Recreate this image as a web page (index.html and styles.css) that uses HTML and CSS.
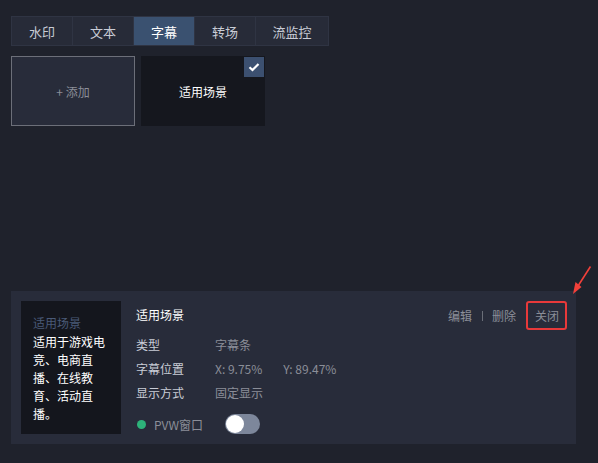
FILE: index.html
```html
<!DOCTYPE html>
<html lang="zh">
<head>
<meta charset="utf-8">
<link rel="stylesheet" href="styles.css">
</head>
<body>
<div class="page">
  <div class="tabs">
    <div class="tab t1">水印</div>
    <div class="tab t1">文本</div>
    <div class="tab t1 active">字幕</div>
    <div class="tab t1">转场</div>
    <div class="tab t2">流监控</div>
  </div>
  <div class="cards">
    <div class="card add">+ 添加</div>
    <div class="card scene">适用场景
      <span class="check"><svg width="12" height="10" viewBox="0 0 12 10"><path d="M1.5 5.2 L4.5 8 L10.5 2" fill="none" stroke="#fff" stroke-width="2.2"/></svg></span>
    </div>
  </div>
  <div class="spacer"></div>
  <div class="panel">
    <div class="thumb">
      <div class="thumb-title">适用场景</div>
      <div class="thumb-text">适用于游戏电竞、电商直播、在线教育、活动直播。</div>
    </div>
    <div class="info">
      <div class="info-title">适用场景</div>
      <div class="row"><span class="label">类型</span><span class="val">字幕条</span></div>
      <div class="row"><span class="label">字幕位置</span><span class="val">X: 9.75%</span><span class="val y">Y: 89.47%</span></div>
      <div class="row"><span class="label">显示方式</span><span class="val">固定显示</span></div>
      <div class="pvw"><span class="dot"></span><span class="pvw-label">PVW窗口</span><span class="toggle"><span class="knob"></span></span></div>
    </div>
    <div class="actions">
      <span class="act">编辑</span><span class="sep"></span><span class="act">删除</span><span class="sep"></span><span class="act close">关闭</span>
    </div>
    <svg class="arrow" width="22" height="30" viewBox="0 0 22 30"><path d="M19.5 1.5 L7 21" stroke="#f2403a" stroke-width="1.6" fill="none"/><path d="M2 29 L4.5 17 L10.5 22 Z" fill="#f2403a"/></svg>
  </div>
</div>
</body>
</html>
```
FILE: styles.css
```css
* { box-sizing: border-box; }
html, body { margin: 0; padding: 0; }
body {
  background: #1f222c;
  width: 598px;
  height: 463px;
  font-family: "Noto Sans CJK SC", "Microsoft YaHei", sans-serif;
  overflow: hidden;
}
.page { padding: 16px 0 0 11px; display: flex; flex-direction: column; height: 463px; }
.tabs { display: flex; width: 318px; height: 30px; border: 1px solid #2f3443; background: #272b38; }
.tab { display: flex; align-items: center; justify-content: center; font-size: 13px; color: #c8ccd6; border-right: 1px solid #2f3443; }
.tab.t1 { width: 61px; }
.tab.t2 { flex: 1; border-right: none; }
.tab.active { background: #3a5170; color: #fff; }
.cards { display: flex; gap: 6px; margin-top: 10px; }
.card { width: 124px; height: 70px; display: flex; align-items: center; justify-content: center; font-size: 12px; position: relative; }
.card.add { border: 1px solid #6c6f79; background: #282c3a; color: #8b8e98; }
.card.scene { background: #15171e; color: #fff; }
.check { position: absolute; right: 1px; top: 1px; width: 20px; height: 20px; background: #3c5070; display: flex; align-items: center; justify-content: center; }
.spacer { flex: 0 0 165px; }
.panel { position: relative; width: 565px; height: 153px; background: #282c3a; display: flex; padding: 10px; }
.thumb { width: 100px; height: 133px; background: #14161d; padding: 13px 10px 0 12px; font-size: 12px; line-height: 18px; }
.thumb-title { color: #4a5a78; margin-bottom: 1px; }
.thumb-text { color: #fff; }
.info { margin-left: 15px; padding-top: 5px; font-size: 12px; }
.info-title { color: #fff; line-height: 18px; margin-bottom: 12px; }
.row { display: flex; line-height: 18px; margin-bottom: 6px; }
.label { width: 79px; color: #c8ccd6; }
.val { color: #8b8e98; }
.val.y { margin-left: 21px; }
.pvw { display: flex; align-items: center; margin-top: 12px; }
.dot { width: 9px; height: 9px; border-radius: 50%; background: #2db37a; margin-left: 1px; }
.pvw-label { color: #8b8e98; margin-left: 8px; width: 71px; }
.toggle { width: 35px; height: 20px; border-radius: 10px; background: #7d879b; position: relative; }
.knob { position: absolute; left: 1px; top: 1px; width: 18px; height: 18px; border-radius: 50%; background: #fff; }
.actions { position: absolute; right: 9px; top: 10px; display: flex; align-items: center; font-size: 12px; color: #8b8e98; }
.act { line-height: 29px; }
.sep { width: 1px; height: 10px; background: #6a6e78; margin: 0 9px 0 10px; }
.close { border: 2px solid #e8393a; border-radius: 3px; padding: 0 6px 0 7px; line-height: 25px; margin-left: -10px; }
.arrow { position: absolute; left: 560px; top: -26px; }
```
